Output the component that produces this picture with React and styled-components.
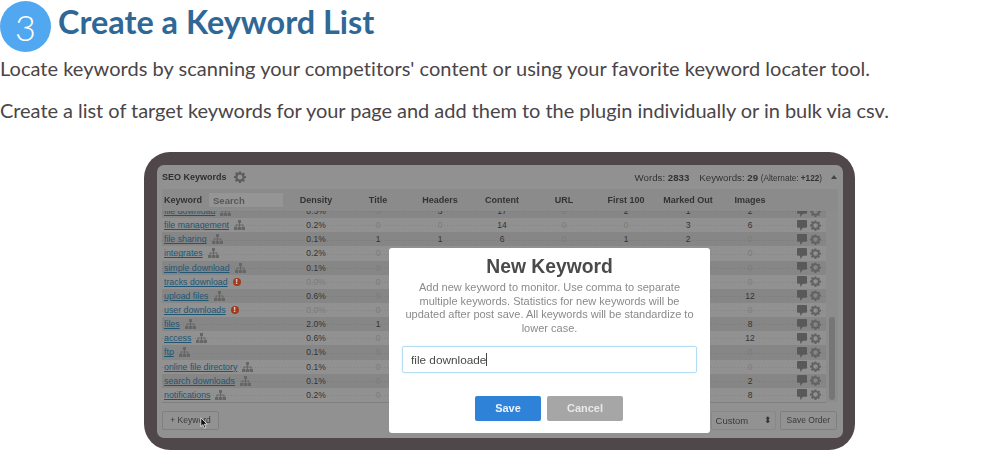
import React from 'react'
import styled, {createGlobalStyle} from 'styled-components'

const GlobalStyle = createGlobalStyle`
    html, body {
        margin: 0;
        padding: 0;
        background: #fff;
        overflow: hidden;
    }
    body {
        font-family: Lato, "Liberation Sans", sans-serif;
    }
`

const COLS = '123px repeat(8, 62px) 41px'

// null = sits behind the modal in the screenshot
const rows = [
    {name: 'file download', density: '0.3%', vals: [0, 3, 17, 0, 2, 1, 2]},
    {name: 'file management', density: '0.2%', vals: [0, 0, 14, 0, 0, 3, 6]},
    {name: 'file sharing', density: '0.1%', vals: [1, 1, 6, 0, 1, 2, 0]},
    {name: 'integrates', density: '0.2%', vals: [0, null, null, null, null, null, 0]},
    {name: 'simple download', density: '0.1%', vals: [0, null, null, null, null, null, 0]},
    {name: 'tracks download', density: '0.0%', warn: true, vals: [0, null, null, null, null, null, 0]},
    {name: 'upload files', density: '0.6%', vals: [0, null, null, null, null, null, 12]},
    {name: 'user downloads', density: '0.0%', warn: true, vals: [0, null, null, null, null, null, 0]},
    {name: 'files', density: '2.0%', vals: [1, null, null, null, null, null, 8]},
    {name: 'access', density: '0.6%', vals: [0, null, null, null, null, null, 12]},
    {name: 'ftp', density: '0.1%', vals: [0, null, null, null, null, null, 0]},
    {name: 'online file directory', density: '0.1%', vals: [0, null, null, null, null, null, 0]},
    {name: 'search downloads', density: '0.1%', vals: [0, null, null, null, null, null, 2]},
    {name: 'notifications', density: '0.2%', vals: [0, null, null, null, null, null, 8]},
]

const heads = ['Density', 'Title', 'Headers', 'Content', 'URL', 'First 100', 'Marked Out', 'Images']

const Gear = ({size = 11, color = '#626262'}) => (
    <svg width={size} height={size} viewBox="0 0 24 24">
        <path
            fill={color}
            fillRule="evenodd"
            d="M10 1h4l.6 3.200 1.900.8 2.700-1.800 2.800 2.800-1.800 2.700.8 1.900L24 10v4l-3.200.6-.8 1.900 1.800 2.700-2.800 2.800-2.700-1.800-1.900.8L14 24h-4l-.6-3.200-1.900-.8-2.700 1.800-2.800-2.800 1.800-2.700-.8-1.900L0 14v-4l3.200-.6.8-1.900L2.200 4.800 5 2l2.700 1.800 1.900-.8zM12 7a5 5 0 1 0 0 10 5 5 0 0 0 0-10z"
        />
    </svg>
)

const Bubble = () => (
    <svg width={10} height={11} viewBox="0 0 11 12">
        <path fill="#595959" d="M1 0h9a1 1 0 0 1 1 1v6.500a1 1 0 0 1-1 1H6.500L3.500 12V8.500H1a1 1 0 0 1-1-1V1a1 1 0 0 1 1-1z" />
    </svg>
)

const Sitemap = () => (
    <svg width={11} height={10} viewBox="0 0 11 10">
        <path fill="#666" d="M4 0h3v3H6v1.500h3.500V7h1.500v3H7.500V7H8.500V5.500H6V7h1v3H4V7h1V5.500H2.500V7h1v3H0V7h1.500V4.500H5V3H4z" />
    </svg>
)

const App = () => {
    return (
        <Page>
            <GlobalStyle />
            <Title>
                <StepBadge>3</StepBadge>
                <TitleText>Create a Keyword List</TitleText>
            </Title>
            <Paragraph>Locate keywords by scanning your competitors' content or using your favorite keyword locater tool.</Paragraph>
            <Paragraph second>Create a list of target keywords for your page and add them to the plugin individually or in bulk via csv.</Paragraph>
            <Figure>
                <Frame>
                    <Panel>
                        <PanelHeader>
                            <PanelName>SEO Keywords <Gear size={12} color="#5c5c5c" /></PanelName>
                            <Stats>
                                <span>Words: <b>2833</b></span>
                                <span>Keywords: <b>29</b> <small>(Alternate: <b>+122</b>)</small></span>
                                <Caret />
                            </Stats>
                        </PanelHeader>
                        <HeadRow>
                            <KeywordHead>Keyword <SearchBox>Search</SearchBox></KeywordHead>
                            {heads.map(h => <HeadCell key={h}>{h}</HeadCell>)}
                        </HeadRow>
                        <TableArea>
                            <Rows>
                                <RowsInner>
                                    {rows.map((row, i) => (
                                        <Row key={row.name} striped={i % 2 === 0}>
                                            <NameCell>
                                                <KeywordLink>{row.name}</KeywordLink>
                                                {row.warn ? <WarnDot>!</WarnDot> : <Sitemap />}
                                            </NameCell>
                                            <Cell muted={row.warn}>{row.density}</Cell>
                                            {row.vals.map((v, j) => <Cell key={j} muted={v === 0}>{v}</Cell>)}
                                            <Actions><Bubble /><Gear /></Actions>
                                        </Row>
                                    ))}
                                </RowsInner>
                            </Rows>
                            <ScrollTrack><ScrollThumb /></ScrollTrack>
                        </TableArea>
                        <Footer>
                            <FootButton>+ Keyword</FootButton>
                            <FootRight>
                                <FootSelect>Custom <SelectArrows>⬍</SelectArrows></FootSelect>
                                <FootButton>Save Order</FootButton>
                            </FootRight>
                        </Footer>
                        <Cursor viewBox="0 0 10 15" width="8" height="12">
                            <path fill="#111" stroke="#eee" strokeWidth="1" d="M1 1v11l2.500-2.500L5.500 14l2-1-2-4H9z" />
                        </Cursor>
                    </Panel>
                    <Modal>
                        <ModalTitle>New Keyword</ModalTitle>
                        <ModalText>Add new keyword to monitor. Use comma to separate multiple keywords. Statistics for new keywords will be updated after post save. All keywords will be standardize to lower case.</ModalText>
                        <ModalInput>file downloade<Caretbar /></ModalInput>
                        <ModalButtons>
                            <SaveButton>Save</SaveButton>
                            <CancelButton>Cancel</CancelButton>
                        </ModalButtons>
                    </Modal>
                </Frame>
            </Figure>
        </Page>
    )
}

const Page = styled.div`
    width: 1000px;
    height: 450px;
    overflow: hidden;
    color: #4a4a4a;
`
const Title = styled.div`
    display: flex;
    align-items: center;
    height: 51px;
    margin-top: 1px;
    gap: 7px;
`
const StepBadge = styled.div`
    width: 51px;
    height: 51px;
    border-radius: 50%;
    background: #52a8f0;
    color: #fff;
    display: flex;
    align-items: center;
    justify-content: center;
    font-size: 36px;
    font-weight: 300;
`
const TitleText = styled.h1`
    margin: 0;
    padding-bottom: 9px;
    font-size: 32.400px;
    font-weight: 700;
    color: #2f6797;
    line-height: 42px;
`
const Paragraph = styled.p`
    margin: ${props => props.second ? '18px' : '4px'} 0 0;
    font-size: 20px;
    line-height: 24px;
    color: #4a4548;
    letter-spacing: ${props => props.second ? '-0.04px' : '0.03px'};
    white-space: nowrap;
`
const Figure = styled.div`
    margin: 30px 0 0 144px;
`
const Frame = styled.div`
    position: relative;
    width: 711px;
    height: 298px;
    box-sizing: border-box;
    padding: 13px 12px 12px 13px;
    background: #50474a;
    border-radius: 26px;
`
const Panel = styled.div`
    position: relative;
    height: 273px;
    box-sizing: border-box;
    background: #919191;
    border-radius: 7px;
    padding: 0 5px;
    font-family: "Liberation Sans", Arial, sans-serif;
    color: #3c3c3c;
    filter: blur(0.45px);
    overflow: hidden;
`
const PanelHeader = styled.div`
    display: flex;
    justify-content: space-between;
    align-items: center;
    height: 24px;
    font-size: 9px;
    font-weight: 700;
`
const PanelName = styled.div`
    display: flex;
    align-items: center;
    gap: 7px;
    color: #2f2f2f;
`
const Stats = styled.div`
    display: flex;
    align-items: center;
    gap: 10px;
    padding-right: 1px;
    font-size: 9.700px;
    font-weight: 400;
    color: #333;
    small {
        font-size: 8.200px;
    }
`
const Caret = styled.i`
    width: 0;
    height: 0;
    margin-left: -1px;
    border-left: 3px solid transparent;
    border-right: 3px solid transparent;
    border-bottom: 4px solid #444;
`
const HeadRow = styled.div`
    display: grid;
    grid-template-columns: ${COLS};
    align-items: center;
    height: 22px;
    background: #8b8b8b;
    font-size: 9px;
    font-weight: 700;
    color: #333;
`
const KeywordHead = styled.div`
    display: flex;
    align-items: center;
    gap: 6px;
    padding-left: 2px;
`
const SearchBox = styled.div`
    width: 76px;
    height: 16px;
    box-sizing: border-box;
    padding-left: 4px;
    line-height: 15px;
    background: #959595;
    border: 1px solid #8a8a8a;
    color: #585858;
    font-size: 9.500px;
`
const HeadCell = styled.div`
    text-align: center;
`
const TableArea = styled.div`
    display: flex;
    height: 191px;
    background: #8f8f8f;
`
const Rows = styled.div`
    width: 664px;
    height: 191px;
    overflow: hidden;
    border-bottom: 1px solid #808080;
`
const RowsInner = styled.div`
    margin-top: -7px;
`
const Row = styled.div`
    display: grid;
    grid-template-columns: ${COLS};
    align-items: center;
    height: 14.150px;
    background-color: ${props => props.striped ? '#868686' : '#919191'};
    background-image: linear-gradient(90deg, rgba(0, 0, 0, 0.09) 1px, transparent 1px);
    background-size: 3px 1px;
    background-position: 0 55%;
    background-repeat: repeat-x;
    font-size: 8.500px;
    color: #333;
`
const NameCell = styled.div`
    display: flex;
    align-items: center;
    gap: 5px;
    padding-left: 2px;
    white-space: nowrap;
`
const KeywordLink = styled.span`
    color: #205673;
    text-decoration: underline;
    font-size: 8.800px;
`
const WarnDot = styled.span`
    width: 8px;
    height: 8px;
    border-radius: 50%;
    background: #a33a1c;
    color: #eee;
    font-size: 7px;
    font-weight: 700;
    line-height: 8px;
    text-align: center;
`
const Cell = styled.div`
    text-align: center;
    color: ${props => props.muted ? '#7c7c7c' : '#333'};
`
const Actions = styled.div`
    display: flex;
    align-items: center;
    gap: 3px;
    padding-left: 16px;
`
const ScrollTrack = styled.div`
    position: relative;
    width: 12px;
    background: #8c8c8c;
`
const ScrollThumb = styled.div`
    position: absolute;
    left: 3px;
    right: 3px;
    top: 106px;
    bottom: 2px;
    border-radius: 3px;
    background: #767676;
`
const Footer = styled.div`
    display: flex;
    justify-content: space-between;
    align-items: center;
    height: 36px;
    font-size: 8.500px;
`
const FootRight = styled.div`
    display: flex;
    gap: 4px;
    padding-right: 1px;
`
const FootButton = styled.div`
    display: flex;
    align-items: center;
    justify-content: center;
    padding: 0 6px;
    height: 17px;
    min-width: 43px;
    background: #929292;
    border: 1px solid #7f7f7f;
    border-radius: 2px;
    color: #3a3a3a;
`
const FootSelect = styled(FootButton)`
    width: 56px;
    justify-content: space-between;
    border-color: #888;
    font-size: 9.500px;
    padding: 0 3px 0 4px;
`
const SelectArrows = styled.span`
    font-size: 9px;
    color: #333;
`
const Cursor = styled.svg`
    position: absolute;
    left: 43px;
    bottom: 9px;
`
const Modal = styled.div`
    position: absolute;
    left: 245px;
    top: 96px;
    width: 321px;
    height: 185px;
    box-sizing: border-box;
    background: #fff;
    border-radius: 3px;
    padding: 7px 13px 0;
    font-family: "Liberation Sans", Arial, sans-serif;
    text-align: center;
    filter: blur(0.35px);
`
const ModalTitle = styled.div`
    font-size: 19.300px;
    font-weight: 700;
    line-height: 24px;
    color: #4a4a4a;
`
const ModalText = styled.div`
    font-size: 11px;
    line-height: 13.500px;
    color: #8a8a8a;
    padding: 2px 1px 0;
`
const ModalInput = styled.div`
    margin-top: 11px;
    height: 27px;
    box-sizing: border-box;
    border: 1px solid #b5dcf2;
    border-radius: 2px;
    box-shadow: 0 0 2px #d5ecf8;
    padding-left: 8px;
    display: flex;
    align-items: center;
    font-size: 11.800px;
    color: #4a4a4a;
`
const Caretbar = styled.span`
    width: 1px;
    height: 13px;
    background: #444;
`
const ModalButtons = styled.div`
    display: flex;
    justify-content: center;
    gap: 6px;
    margin-top: 23px;
    padding-right: 1px;
`
const SaveButton = styled.div`
    width: 66px;
    height: 25px;
    line-height: 25px;
    border-radius: 2px;
    background: #2e83d9;
    color: #eaf3fb;
    font-size: 11px;
    font-weight: 700;
`
const CancelButton = styled(SaveButton)`
    width: 76px;
    background: #a6a6a6;
    color: #e8e8e8;
`

export default App
